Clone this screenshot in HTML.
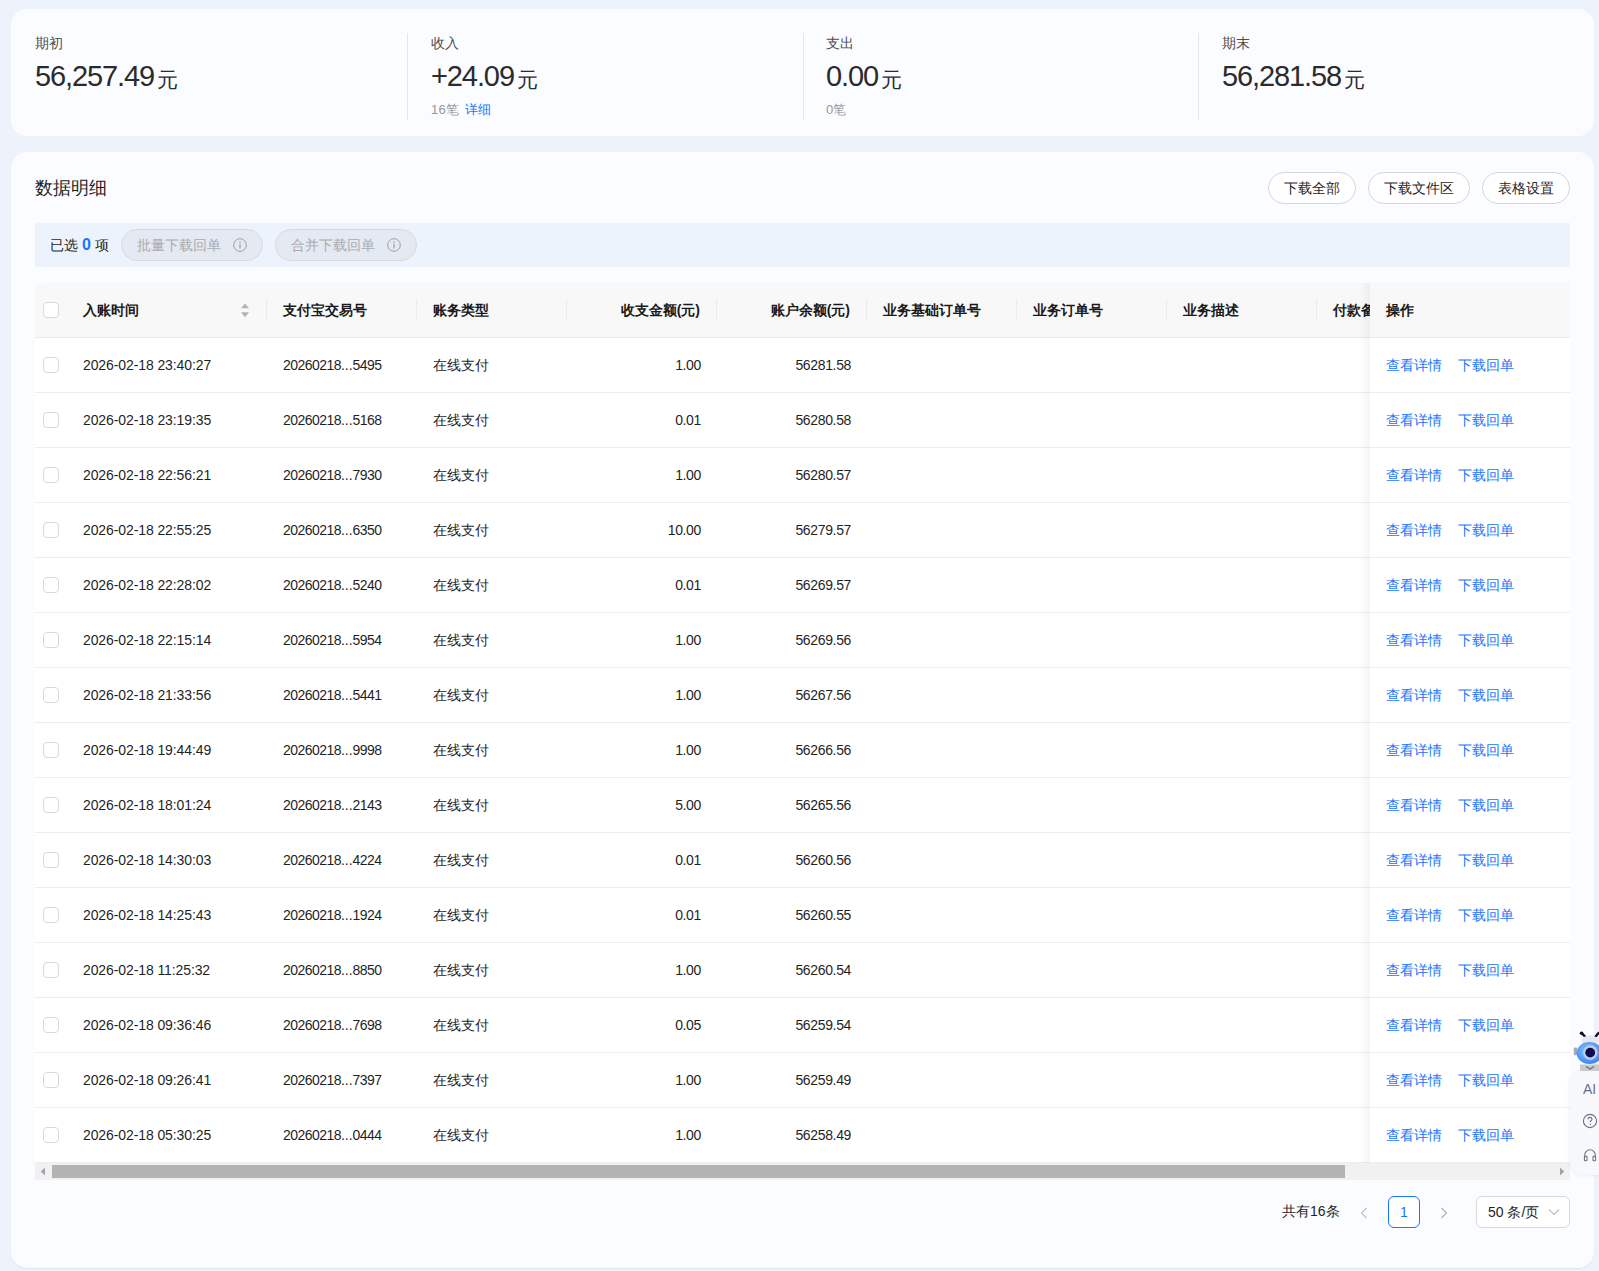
<!DOCTYPE html>
<html><head><meta charset="utf-8"><style>
*{box-sizing:border-box;margin:0;padding:0}
html,body{width:1599px;height:1271px;overflow:hidden}
body{background:#eef2fa;font-family:"Liberation Sans",sans-serif;color:#1f1f1f;position:relative}
.card1{position:absolute;left:11px;top:9px;width:1583px;height:127px;border-radius:16px;background:#fafcff}
.card2{position:absolute;left:11px;top:152px;width:1583px;height:1116px;border-radius:16px;background:#fafcff;box-shadow:0 1px 1px rgba(0,0,0,0.06)}
.stat{position:absolute;top:0}
.lbl{position:absolute;top:25px;left:0;font-size:14px;color:#4d4d4d;white-space:nowrap;line-height:18px}
.num{position:absolute;top:49px;left:0;font-size:29px;color:#2b2b2b;white-space:nowrap;line-height:36px;letter-spacing:-1.1px}
.yuan{font-size:21px;margin-left:3px;letter-spacing:0;position:relative;top:1px}
.sub{position:absolute;top:92px;left:0;font-size:13px;letter-spacing:0.2px;color:#999;white-space:nowrap;line-height:18px}
.blue{color:#1677ff;margin-left:2px}
.sdiv{position:absolute;top:24px;width:1px;height:87px;background:#e6e6e6}
.title{position:absolute;left:24px;top:24px;font-size:18px;line-height:24px;color:#1f1f1f}
.btn{position:absolute;top:20px;height:32px;border:1px solid #d6d6d6;border-radius:16px;background:#fff;font-size:14px;line-height:30px;text-align:center;color:#1f1f1f}
.selbar{position:absolute;left:24px;top:71px;width:1535px;height:44px;background:#edf3fd}
.selt{position:absolute;left:15px;top:12px;font-size:14px;line-height:20px;color:#1f1f1f;white-space:nowrap}
.selt b{color:#1677ff;font-size:16px}
.dbtn{position:absolute;top:6px;width:142px;height:32px;border:1px solid #d9d9d9;border-radius:16px;background:#e5e9f2;font-size:14px;line-height:30px;color:#ababab;padding-left:15px;white-space:nowrap}
.info{position:absolute;left:111px;top:8px}
.table{position:absolute;left:35px;top:283px;width:1535px;height:897px;overflow:hidden}
.thead{position:absolute;left:0;top:0;width:1535px;height:55px;background:#f8f8f8;border-bottom:1px solid #ebebeb;border-top-left-radius:8px}
.ht{position:absolute;top:17px;font-size:14px;font-weight:bold;line-height:20px;color:#1a1a1a;white-space:nowrap}
.r{text-align:right}
.dv{position:absolute;top:16px;width:1px;height:22px;background:#ebebeb}
.sort{position:absolute;left:206px;top:20px}
.cb{position:absolute;left:8px;top:19px;width:16px;height:16px;border:1px solid #d9d9d9;border-radius:4px;background:#fff}
.row{position:absolute;left:0;width:1535px;height:55px;background:#fff;border-bottom:1px solid #ededed}
.c{position:absolute;top:17px;font-size:14px;line-height:20px;color:#1f1f1f;white-space:nowrap}
.fixed{position:absolute;left:1335px;top:0;width:200px;height:880px}
.fixed::before{content:"";position:absolute;left:-10px;top:0;width:10px;height:880px;background:linear-gradient(to right,rgba(0,0,0,0),rgba(0,0,0,0.045))}
.fhead{position:absolute;left:0;top:0;width:200px;height:55px;background:#f8f8f8;border-bottom:1px solid #ebebeb}
.frow{position:absolute;left:0;width:200px;height:55px;background:#fff;border-bottom:1px solid #ededed}
.lk{position:absolute;top:17px;font-size:14px;line-height:20px;color:#1677ff;white-space:nowrap}
.sbar{position:absolute;left:0;top:880px;width:1535px;height:17px;background:#f1f1f1}
.thumb{position:absolute;left:17px;top:2px;width:1293px;height:13px;background:#b3b3b3}
.arl{position:absolute;left:5px;top:4px}
.arr{position:absolute;left:1524px;top:4px}
.pager{position:absolute;left:0;top:0}
.total{position:absolute;left:1282px;top:1201px;font-size:14px;line-height:20px;color:#1f1f1f;white-space:nowrap}
.prev{position:absolute;left:1359px;top:1206px}
.next{position:absolute;left:1439px;top:1206px}
.pg{position:absolute;left:1388px;top:1196px;width:32px;height:32px;border:1px solid #1677ff;border-radius:6px;font-size:14px;line-height:30px;text-align:center;color:#1677ff;background:#fff}
.psel{position:absolute;left:1476px;top:1196px;width:94px;height:32px;border:1px solid #d9d9d9;border-radius:6px;background:#fff;font-size:14px;line-height:30px;padding-left:11px;color:#1f1f1f;white-space:nowrap}
.chev{position:absolute;left:71px;top:11px}
.float{position:absolute;left:1570px;top:1071px;width:40px;height:104px;background:#f7f8fc;border-radius:12px 0 0 12px;box-shadow:0 0 4px rgba(0,0,0,0.08)}
.ai{position:absolute;left:13px;top:10px;font-size:14px;line-height:16px;color:#6a7088}
.q{position:absolute;left:12px;top:42px}
.hp{position:absolute;left:13px;top:77px}
.robot{position:absolute;left:1565px;top:1025px}
.d{letter-spacing:-0.1px}
.tn{letter-spacing:-0.55px}
.dots{letter-spacing:0}
.amt{letter-spacing:-0.35px}

</style></head><body>
<div class="card1">
  <div class="stat" style="left:24px"><div class="lbl">期初</div><div class="num">56,257.49<span class="yuan">元</span></div></div>
  <div class="sdiv" style="left:396px"></div>
  <div class="stat" style="left:420px"><div class="lbl">收入</div><div class="num">+24.09<span class="yuan">元</span></div><div class="sub">16笔 <span class="blue">详细</span></div></div>
  <div class="sdiv" style="left:792px"></div>
  <div class="stat" style="left:815px"><div class="lbl">支出</div><div class="num">0.00<span class="yuan">元</span></div><div class="sub">0笔</div></div>
  <div class="sdiv" style="left:1187px"></div>
  <div class="stat" style="left:1211px"><div class="lbl">期末</div><div class="num">56,281.58<span class="yuan">元</span></div></div>
</div>
<div class="card2">
  <div class="title">数据明细</div>
  <div class="btn" style="left:1257px;width:88px">下载全部</div>
  <div class="btn" style="left:1357px;width:102px">下载文件区</div>
  <div class="btn" style="left:1471px;width:88px">表格设置</div>
  <div class="selbar">
    <span class="selt">已选 <b>0</b> 项</span>
    <div class="dbtn" style="left:86px">批量下载回单<svg class="info" width="14" height="14" viewBox="0 0 14 14"><circle cx="7" cy="7" r="6.3" stroke="#a0a0a0" stroke-width="1" fill="none"/><circle cx="7" cy="4.2" r="0.8" fill="#a0a0a0"/><path d="M7 6V10.5" stroke="#a0a0a0" stroke-width="1.2"/></svg></div>
    <div class="dbtn" style="left:240px">合并下载回单<svg class="info" width="14" height="14" viewBox="0 0 14 14"><circle cx="7" cy="7" r="6.3" stroke="#a0a0a0" stroke-width="1" fill="none"/><circle cx="7" cy="4.2" r="0.8" fill="#a0a0a0"/><path d="M7 6V10.5" stroke="#a0a0a0" stroke-width="1.2"/></svg></div>
  </div>
</div>
<div class="table">
  <div class="thead"><div class="cb" style="top:19px"></div><div class="ht" style="left:48px">入账时间</div><div class="ht" style="left:248px">支付宝交易号</div><div class="ht" style="left:398px">账务类型</div><div class="ht r" style="right:870px">收支金额(元)</div><div class="ht r" style="right:720px">账户余额(元)</div><div class="ht" style="left:848px">业务基础订单号</div><div class="ht" style="left:998px">业务订单号</div><div class="ht" style="left:1148px">业务描述</div><div class="ht" style="left:1298px">付款备注</div><div class="dv" style="left:231px"></div><div class="dv" style="left:381px"></div><div class="dv" style="left:531px"></div><div class="dv" style="left:681px"></div><div class="dv" style="left:831px"></div><div class="dv" style="left:981px"></div><div class="dv" style="left:1131px"></div><div class="dv" style="left:1281px"></div><svg class="sort" width="8" height="15" viewBox="0 0 8 15"><path d="M4 0.5L8 5.3H0Z" fill="#b3b3b3"/><path d="M4 14.3L8 9.2H0Z" fill="#b3b3b3"/></svg></div>
  <div class="row" style="top:55px"><div class="cb"></div><div class="c d" style="left:48px">2026-02-18 23:40:27</div><div class="c tn" style="left:248px">20260218<span class=dots>...</span>5495</div><div class="c" style="left:398px">在线支付</div><div class="c r amt" style="right:869px">1.00</div><div class="c r amt" style="right:719px">56281.58</div></div><div class="row" style="top:110px"><div class="cb"></div><div class="c d" style="left:48px">2026-02-18 23:19:35</div><div class="c tn" style="left:248px">20260218<span class=dots>...</span>5168</div><div class="c" style="left:398px">在线支付</div><div class="c r amt" style="right:869px">0.01</div><div class="c r amt" style="right:719px">56280.58</div></div><div class="row" style="top:165px"><div class="cb"></div><div class="c d" style="left:48px">2026-02-18 22:56:21</div><div class="c tn" style="left:248px">20260218<span class=dots>...</span>7930</div><div class="c" style="left:398px">在线支付</div><div class="c r amt" style="right:869px">1.00</div><div class="c r amt" style="right:719px">56280.57</div></div><div class="row" style="top:220px"><div class="cb"></div><div class="c d" style="left:48px">2026-02-18 22:55:25</div><div class="c tn" style="left:248px">20260218<span class=dots>...</span>6350</div><div class="c" style="left:398px">在线支付</div><div class="c r amt" style="right:869px">10.00</div><div class="c r amt" style="right:719px">56279.57</div></div><div class="row" style="top:275px"><div class="cb"></div><div class="c d" style="left:48px">2026-02-18 22:28:02</div><div class="c tn" style="left:248px">20260218<span class=dots>...</span>5240</div><div class="c" style="left:398px">在线支付</div><div class="c r amt" style="right:869px">0.01</div><div class="c r amt" style="right:719px">56269.57</div></div><div class="row" style="top:330px"><div class="cb"></div><div class="c d" style="left:48px">2026-02-18 22:15:14</div><div class="c tn" style="left:248px">20260218<span class=dots>...</span>5954</div><div class="c" style="left:398px">在线支付</div><div class="c r amt" style="right:869px">1.00</div><div class="c r amt" style="right:719px">56269.56</div></div><div class="row" style="top:385px"><div class="cb"></div><div class="c d" style="left:48px">2026-02-18 21:33:56</div><div class="c tn" style="left:248px">20260218<span class=dots>...</span>5441</div><div class="c" style="left:398px">在线支付</div><div class="c r amt" style="right:869px">1.00</div><div class="c r amt" style="right:719px">56267.56</div></div><div class="row" style="top:440px"><div class="cb"></div><div class="c d" style="left:48px">2026-02-18 19:44:49</div><div class="c tn" style="left:248px">20260218<span class=dots>...</span>9998</div><div class="c" style="left:398px">在线支付</div><div class="c r amt" style="right:869px">1.00</div><div class="c r amt" style="right:719px">56266.56</div></div><div class="row" style="top:495px"><div class="cb"></div><div class="c d" style="left:48px">2026-02-18 18:01:24</div><div class="c tn" style="left:248px">20260218<span class=dots>...</span>2143</div><div class="c" style="left:398px">在线支付</div><div class="c r amt" style="right:869px">5.00</div><div class="c r amt" style="right:719px">56265.56</div></div><div class="row" style="top:550px"><div class="cb"></div><div class="c d" style="left:48px">2026-02-18 14:30:03</div><div class="c tn" style="left:248px">20260218<span class=dots>...</span>4224</div><div class="c" style="left:398px">在线支付</div><div class="c r amt" style="right:869px">0.01</div><div class="c r amt" style="right:719px">56260.56</div></div><div class="row" style="top:605px"><div class="cb"></div><div class="c d" style="left:48px">2026-02-18 14:25:43</div><div class="c tn" style="left:248px">20260218<span class=dots>...</span>1924</div><div class="c" style="left:398px">在线支付</div><div class="c r amt" style="right:869px">0.01</div><div class="c r amt" style="right:719px">56260.55</div></div><div class="row" style="top:660px"><div class="cb"></div><div class="c d" style="left:48px">2026-02-18 11:25:32</div><div class="c tn" style="left:248px">20260218<span class=dots>...</span>8850</div><div class="c" style="left:398px">在线支付</div><div class="c r amt" style="right:869px">1.00</div><div class="c r amt" style="right:719px">56260.54</div></div><div class="row" style="top:715px"><div class="cb"></div><div class="c d" style="left:48px">2026-02-18 09:36:46</div><div class="c tn" style="left:248px">20260218<span class=dots>...</span>7698</div><div class="c" style="left:398px">在线支付</div><div class="c r amt" style="right:869px">0.05</div><div class="c r amt" style="right:719px">56259.54</div></div><div class="row" style="top:770px"><div class="cb"></div><div class="c d" style="left:48px">2026-02-18 09:26:41</div><div class="c tn" style="left:248px">20260218<span class=dots>...</span>7397</div><div class="c" style="left:398px">在线支付</div><div class="c r amt" style="right:869px">1.00</div><div class="c r amt" style="right:719px">56259.49</div></div><div class="row" style="top:825px"><div class="cb"></div><div class="c d" style="left:48px">2026-02-18 05:30:25</div><div class="c tn" style="left:248px">20260218<span class=dots>...</span>0444</div><div class="c" style="left:398px">在线支付</div><div class="c r amt" style="right:869px">1.00</div><div class="c r amt" style="right:719px">56258.49</div></div>
  <div class="fixed"><div class="fhead"><div class="ht" style="left:16px">操作</div></div><div class="frow" style="top:55px"><span class="lk" style="left:16px">查看详情</span><span class="lk" style="left:88px">下载回单</span></div><div class="frow" style="top:110px"><span class="lk" style="left:16px">查看详情</span><span class="lk" style="left:88px">下载回单</span></div><div class="frow" style="top:165px"><span class="lk" style="left:16px">查看详情</span><span class="lk" style="left:88px">下载回单</span></div><div class="frow" style="top:220px"><span class="lk" style="left:16px">查看详情</span><span class="lk" style="left:88px">下载回单</span></div><div class="frow" style="top:275px"><span class="lk" style="left:16px">查看详情</span><span class="lk" style="left:88px">下载回单</span></div><div class="frow" style="top:330px"><span class="lk" style="left:16px">查看详情</span><span class="lk" style="left:88px">下载回单</span></div><div class="frow" style="top:385px"><span class="lk" style="left:16px">查看详情</span><span class="lk" style="left:88px">下载回单</span></div><div class="frow" style="top:440px"><span class="lk" style="left:16px">查看详情</span><span class="lk" style="left:88px">下载回单</span></div><div class="frow" style="top:495px"><span class="lk" style="left:16px">查看详情</span><span class="lk" style="left:88px">下载回单</span></div><div class="frow" style="top:550px"><span class="lk" style="left:16px">查看详情</span><span class="lk" style="left:88px">下载回单</span></div><div class="frow" style="top:605px"><span class="lk" style="left:16px">查看详情</span><span class="lk" style="left:88px">下载回单</span></div><div class="frow" style="top:660px"><span class="lk" style="left:16px">查看详情</span><span class="lk" style="left:88px">下载回单</span></div><div class="frow" style="top:715px"><span class="lk" style="left:16px">查看详情</span><span class="lk" style="left:88px">下载回单</span></div><div class="frow" style="top:770px"><span class="lk" style="left:16px">查看详情</span><span class="lk" style="left:88px">下载回单</span></div><div class="frow" style="top:825px"><span class="lk" style="left:16px">查看详情</span><span class="lk" style="left:88px">下载回单</span></div></div>
  <div class="sbar"><div class="thumb"></div><svg class="arl" width="6" height="9" viewBox="0 0 6 9"><path d="M0.8 4.5L5 0.5V8.5Z" fill="#a3a3a3"/></svg><svg class="arr" width="6" height="9" viewBox="0 0 6 9"><path d="M5.2 4.5L1 0.5V8.5Z" fill="#a3a3a3"/></svg></div>
</div>
<div class="pager">
  <span class="total">共有16条</span>
  <svg class="prev" width="10" height="14" viewBox="0 0 10 14"><path d="M7.5 2L2.5 7L7.5 12" stroke="#c4c4c4" stroke-width="1.2" fill="none"/></svg>
  <div class="pg">1</div>
  <svg class="next" width="10" height="14" viewBox="0 0 10 14"><path d="M2.5 2L7.5 7L2.5 12" stroke="#b0b0b0" stroke-width="1.2" fill="none"/></svg>
  <div class="psel">50 条/页<svg class="chev" width="12" height="8" viewBox="0 0 12 8"><path d="M1 1.5L6 6.5L11 1.5" stroke="#bfbfbf" stroke-width="1.2" fill="none"/></svg></div>
</div>
<div class="float">
  <div class="ai">AI</div>
  <svg class="q" width="16" height="16" viewBox="0 0 16 16"><circle cx="8" cy="8" r="6.6" stroke="#6b7085" stroke-width="1.1" fill="none"/><path d="M6 6.3C6 5 7 4.4 8 4.4S10 5 10 6.2C10 7.4 8.3 7.6 8.3 8.9V9.3" stroke="#6b7085" stroke-width="1.1" fill="none"/><circle cx="8.3" cy="11.4" r="0.7" fill="#6b7085"/></svg>
  <svg class="hp" width="14" height="14" viewBox="0 0 16 16"><path d="M2 11V8A6 6 0 0 1 14 8V11" stroke="#6b7085" stroke-width="1.2" fill="none"/><rect x="1.6" y="9.5" width="3" height="5" rx="0.6" stroke="#6b7085" stroke-width="1.2" fill="none"/><rect x="11.4" y="9.5" width="3" height="5" rx="0.6" stroke="#6b7085" stroke-width="1.2" fill="none"/></svg>
</div>
<svg class="robot" width="34" height="50" viewBox="0 0 34 50">
  <defs><radialGradient id="bg1" cx="0.45" cy="0.4" r="0.6"><stop offset="0" stop-color="#8fd0ff"/><stop offset="1" stop-color="#3a86f0"/></radialGradient></defs>
  <path d="M16.5 8 L21.3 12.8" stroke="#0d1033" stroke-width="2.4" stroke-linecap="round"/>
  <circle cx="16.6" cy="8.2" r="1.8" fill="#0d1033"/>
  <path d="M33.5 8 L29.6 12.8" stroke="#0d1033" stroke-width="2.4" stroke-linecap="round"/>
  <ellipse cx="25" cy="15.5" rx="8.5" ry="5" fill="#e6e7ec"/>
  <rect x="15" y="39.5" width="20" height="6.5" fill="#c8cacf"/>
  <path d="M21 41.5 L25 44 L29 41.5" stroke="#6b6d74" stroke-width="1.3" fill="none"/>
  <rect x="8.8" y="22.6" width="3.2" height="7.6" rx="0.8" fill="#a8abb3"/>
  <ellipse cx="24.4" cy="28" rx="12.8" ry="10.9" fill="url(#bg1)"/>
  <circle cx="25.3" cy="27.6" r="7.3" fill="#c3cbee"/>
  <circle cx="25.2" cy="27.6" r="4.9" fill="#0b0f4d"/>
</svg>
</body></html>
